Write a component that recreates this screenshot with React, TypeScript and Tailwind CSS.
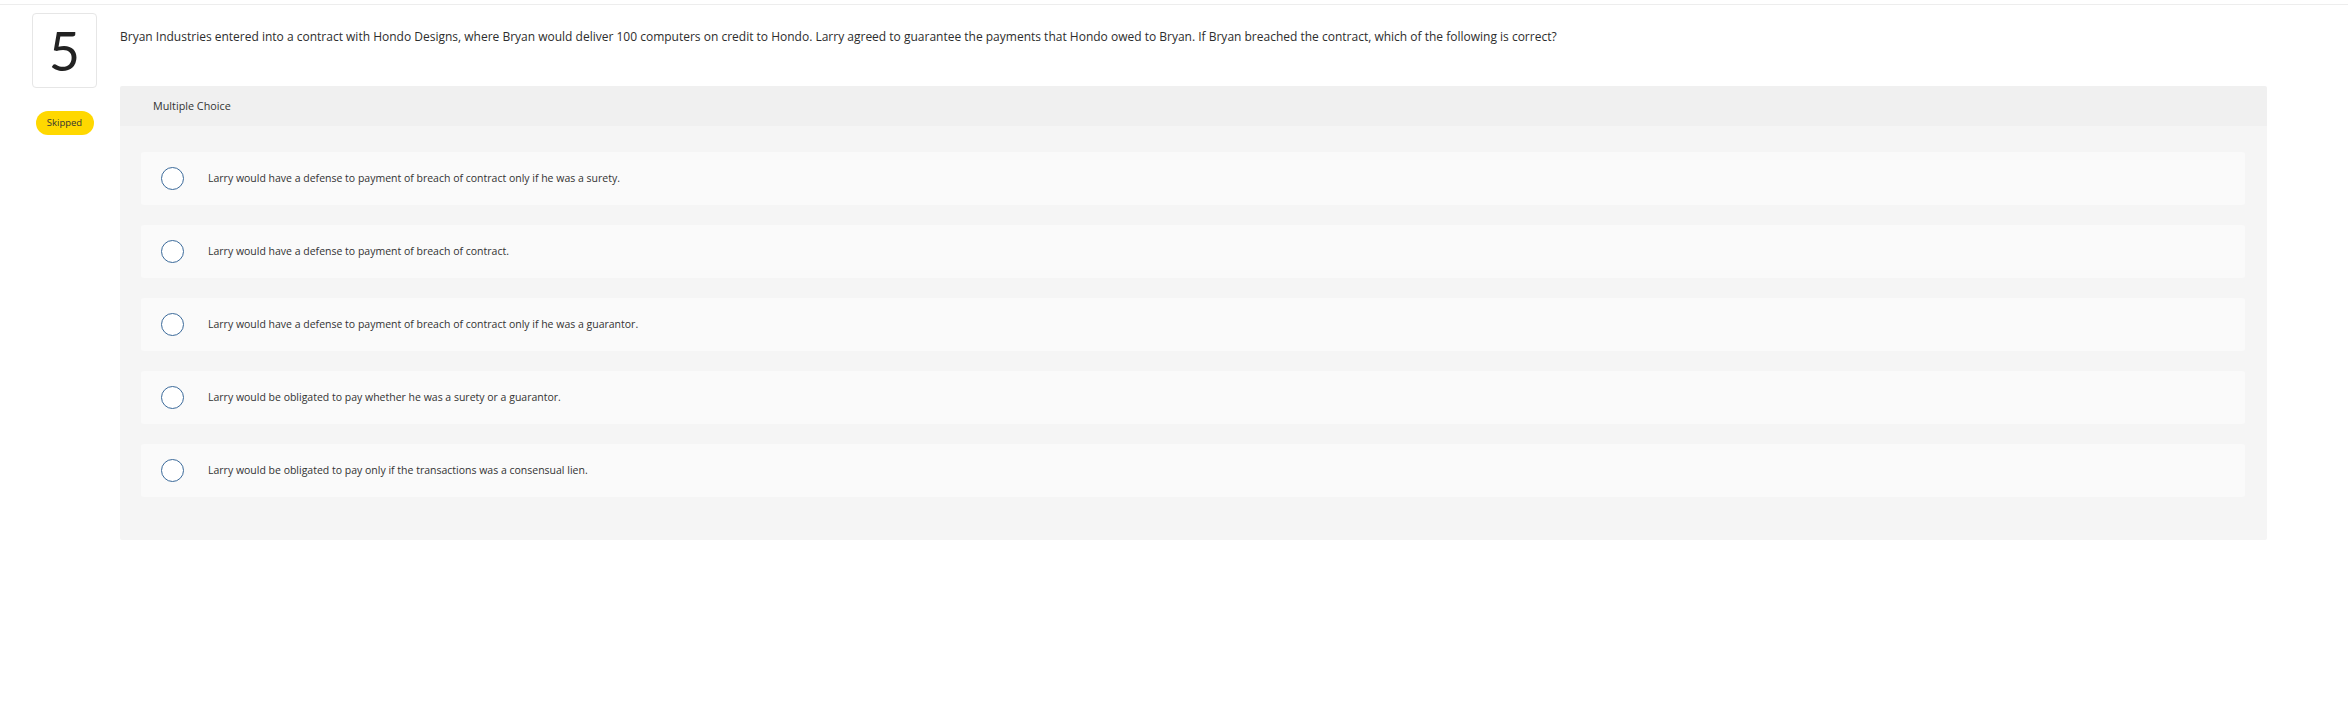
import React from 'react'

const question =
  'Bryan Industries entered into a contract with Hondo Designs, where Bryan would deliver 100 computers on credit to Hondo. Larry agreed to guarantee the payments that Hondo owed to Bryan. If Bryan breached the contract, which of the following is correct?'

const choices = [
  'Larry would have a defense to payment of breach of contract only if he was a surety.',
  'Larry would have a defense to payment of breach of contract.',
  'Larry would have a defense to payment of breach of contract only if he was a guarantor.',
  'Larry would be obligated to pay whether he was a surety or a guarantor.',
  'Larry would be obligated to pay only if the transactions was a consensual lien.',
]

const Radio = () => (
  <span className="block h-[23px] w-[23px] shrink-0 rounded-full border-[1.5px] border-[#3b6a9a] bg-white" />
)

const Choice = ({ label }: { label: string }) => (
  <div className="flex h-[53px] items-center gap-[24px] rounded-[3px] bg-[#fafafa] pl-[20px]">
    <Radio />
    <span className="text-[10.5px] leading-none text-[#333]">{label}</span>
  </div>
)

export default function App() {
  return (
    <div className="min-h-[709px] w-full bg-white text-[#2d2d2d]" style={{ fontFamily: '"Open Sans", Lato, sans-serif' }}>
      <div className="h-[5px] border-b border-[#ededed]" />
      <div className="flex pt-[8px] pl-[32px]">
        <div className="flex w-[65px] flex-col items-center">
          <div className="flex h-[75px] w-[65px] items-center justify-center rounded-[4px] border border-[#e6e6e6]">
            <span className="text-[54px] leading-none text-[#222]" style={{ fontFamily: 'Lato, sans-serif' }}>5</span>
          </div>
          <span className="mt-[23px] flex h-[24px] w-[58px] items-center justify-center rounded-full bg-[#ffd800] text-[9.5px] text-[#333]">
            Skipped
          </span>
        </div>
        <div className="ml-[23px] w-[2147px]">
          <p className="mt-[16px] text-[12px] leading-[16px] text-[#2d2d2d]">{question}</p>
          <div className="mt-[41px] overflow-hidden rounded-[2px]">
            <div className="flex h-[40px] items-center bg-[#f0f0f0] pl-[33px] text-[10.8px] text-[#333]">Multiple Choice</div>
            <div className="flex flex-col gap-[20px] bg-[#f5f5f5] pt-[26px] pr-[22px] pb-[43px] pl-[21px]">
              {choices.map((c) => (
                <Choice key={c} label={c} />
              ))}
            </div>
          </div>
        </div>
      </div>
    </div>
  )
}
